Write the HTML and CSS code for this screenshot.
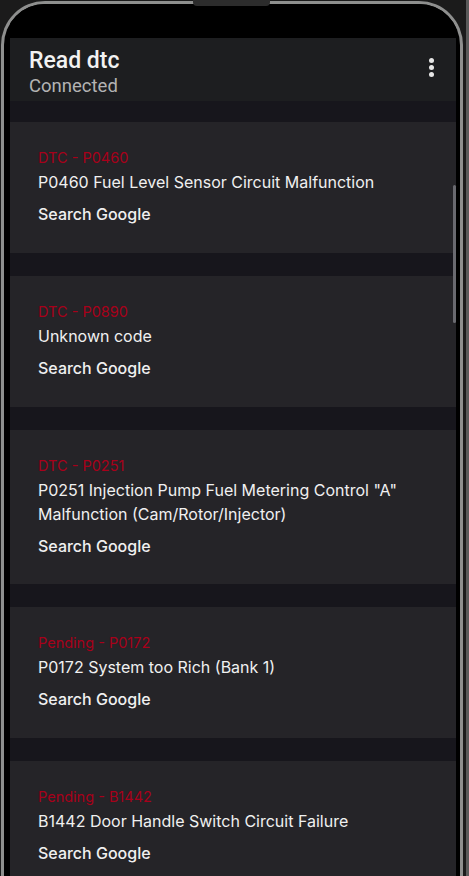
FILE: index.html
```html
<!DOCTYPE html>
<html>
<head>
<meta charset="utf-8">
<link rel="stylesheet" href="styles.css">
</head>
<body>
<div class="device">
  <div class="notch"></div>
  <div class="bezel">
    <div class="screen">
      <div class="status"></div>
      <header class="appbar">
        <div class="titles">
          <div class="title">Read dtc</div>
          <div class="subtitle">Connected</div>
        </div>
        <div class="kebab"><span></span><span></span><span></span></div>
      </header>
      <div class="list">
        <div class="scrollbar"></div>
        <div class="card">
          <div class="label">DTC - P0460</div>
          <div class="desc">P0460 Fuel Level Sensor Circuit Malfunction</div>
          <div class="search">Search Google</div>
        </div>
        <div class="card">
          <div class="label">DTC - P0890</div>
          <div class="desc">Unknown code</div>
          <div class="search">Search Google</div>
        </div>
        <div class="card card-tall">
          <div class="label">DTC - P0251</div>
          <div class="desc">P0251 Injection Pump Fuel Metering Control "A" Malfunction (Cam/Rotor/Injector)</div>
          <div class="search">Search Google</div>
        </div>
        <div class="card">
          <div class="label">Pending - P0172</div>
          <div class="desc">P0172 System too Rich (Bank 1)</div>
          <div class="search">Search Google</div>
        </div>
        <div class="card">
          <div class="label">Pending - B1442</div>
          <div class="desc">B1442 Door Handle Switch Circuit Failure</div>
          <div class="search">Search Google</div>
        </div>
      </div>
    </div>
  </div>
</div>
</body>
</html>
```
FILE: styles.css
```css
html, body {
  margin: 0;
  padding: 0;
  background: #151515;
}
.device {
  position: relative;
  width: 469px;
  height: 876px;
  box-sizing: border-box;
  padding: 1px 3px 0 1px;
  background: #1b1b1b;
  border-right: 3px solid #5a5a5a;
  overflow: hidden;
  font-family: Inter, "Noto Sans", sans-serif;
}
.notch {
  position: absolute;
  left: 193px;
  top: 0;
  width: 77px;
  height: 6px;
  background: #2c2c2c;
  border-radius: 0 0 4px 4px;
  z-index: 3;
}
.bezel {
  height: 100%;
  box-sizing: border-box;
  border: 3px solid #8e8f8e;
  border-bottom: none;
  border-radius: 44px 44px 0 0;
  background: #000;
  padding: 0 4px 0 6px;
  overflow: hidden;
}
.screen {
  height: 100%;
  display: flex;
  flex-direction: column;
  background: #000;
}
.status {
  height: 34px;
  flex: none;
}
.appbar {
  height: 63px;
  flex: none;
  background: #1d1e20;
  display: flex;
  align-items: center;
  justify-content: space-between;
  padding: 0 22px 0 19px;
  box-sizing: border-box;
}
.titles {
  display: flex;
  flex-direction: column;
  padding-top: 7px;
}
.title {
  font-family: Roboto, sans-serif;
  font-weight: 500;
  font-size: 23px;
  line-height: 26px;
  color: #f2f2f2;
}
.subtitle {
  font-family: Roboto, sans-serif;
  font-size: 18.5px;
  line-height: 24px;
  color: #b3b3b3;
}
.kebab {
  display: flex;
  flex-direction: column;
  gap: 2px;
  margin-top: -4px;
}
.kebab span {
  width: 5px;
  height: 5px;
  border-radius: 50%;
  background: #e6e6e6;
}
.list {
  position: relative;
  flex: 1;
  background: #17161c;
  padding-top: 21px;
  display: flex;
  flex-direction: column;
  gap: 23px;
}
.scrollbar {
  position: absolute;
  right: 0;
  top: 84px;
  width: 3px;
  height: 138px;
  border-radius: 2px;
  background: #6a6a70;
}
.card {
  background: #252428;
  padding: 24px 20px 27px 28px;
  color: #f0f0f0;
  font-size: 16px;
  line-height: 24px;
}
.card-tall {
  padding-bottom: 26px;
}
.label {
  color: #a8001a;
  font-size: 14.5px;
}
.desc {
  margin-bottom: 8px;
}
.search {
  font-weight: 500;
}
```
